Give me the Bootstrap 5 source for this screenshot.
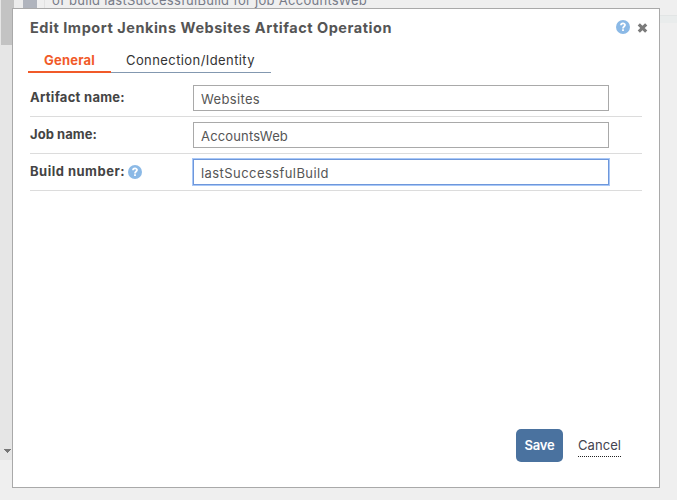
<!DOCTYPE html>
<html lang="en">
<head>
<meta charset="utf-8">
<title>Edit Operation</title>
<link href="https://cdn.jsdelivr.net/npm/bootstrap@5.3.0/dist/css/bootstrap.min.css" rel="stylesheet">
<style>
html,body{height:500px;overflow:hidden}
body{background:#efefef;color:#444;font-family:Inter,"Liberation Sans",sans-serif;font-size:13px;line-height:18px}
svg{display:block}
.backdrop{inset:0;z-index:0}
.scroll-strip{width:14px;height:460px;background:#e6e6e6;padding-left:1px}
.scroll-thumb{width:13px;height:45px;background:#c3c3c3}
.scroll-arrow{left:4px;top:449px;z-index:1}
.gutter{width:9px;height:24px;background:#ececec}
.gutter-bar{width:14px;height:24px;background:#b0b4bd}
.gutter-line{width:8px;height:24px;border-right:1px solid #e2e2e2}
.log-text{margin:-10px 0 0 7px;color:#777b88;height:20px;line-height:20px;letter-spacing:.273px}
.side-band{right:0;top:15px;width:17px;height:8px;background:#e9ecec;border-top:1px solid #e2e5e5}
.dialog-box{z-index:1;width:648px;height:480px;margin:8px 0 0 12px;background:#fff;border:1px solid #a9a9a9}
.dialog-head{height:38px;padding:10px 11px 0 17px}
.dialog-title{font-size:14.5px;font-weight:700;line-height:18px;margin:0;color:#555;letter-spacing:.529px}
.close-btn{background:none;border:0;padding:0;margin:4px 0 0 7px}
.help-top{margin-top:1px}
.tab-strip{margin-left:15px}
.tab-strip a{height:26px;line-height:27px;text-decoration:none;color:#333;padding:0 15px;border-bottom:1px solid #8398b0;letter-spacing:.413px;width:160px}
.tab-strip a.current{color:#f15a29;font-weight:700;padding:0 0 0 16px;width:83px;border-bottom:2px solid #f15a29;letter-spacing:.21px}
.fields{margin:6px 17px 0}
.field-row{height:37px;border-bottom:1px solid #dcdcdc;padding-top:5px}
.field-row:first-child{height:38px;padding-top:6px}
.field-row label{width:163px;font-weight:700;padding-top:3px;letter-spacing:.279px}
.field-row .job-label{letter-spacing:.063px}
.field-row .build-label{letter-spacing:.489px;gap:3px}
.build-label svg{margin-top:3px}
.text-box{width:416px;height:26px;border:1px solid #a9a9a9;border-radius:0;padding:1px 7px 0;font-size:13px;line-height:18px;color:#555;letter-spacing:.342px}
.text-box.job-box{letter-spacing:.161px}
.text-box.active-box{border-color:#6e97db;box-shadow:0 0 0 1px #a9c8f7;letter-spacing:.429px}
.dialog-foot{padding:0 38px 25px 0;gap:15px}
.save-btn{width:47px;height:33px;background:#4a729f;color:#fff;border:0;border-radius:5px;font-weight:600;padding:0;font-size:13px;letter-spacing:-.19px}
.cancel-link{color:#44444f;text-decoration:none;border-bottom:1px dotted #222;line-height:20px;height:22px;margin-top:1px;letter-spacing:.06px;width:43px}
</style>
</head>
<body>
<div class="backdrop position-absolute d-flex">
  <div class="scroll-strip"><div class="scroll-thumb"></div></div>
  <div class="gutter"></div>
  <div class="gutter-bar"></div>
  <div class="gutter-line"></div>
  <div class="log-text">of build lastSuccessfulBuild for job AccountsWeb</div>
  <div class="side-band position-absolute"></div>
</div>
<svg class="scroll-arrow position-absolute" width="7" height="4" viewBox="0 0 7 4"><path d="M0 0h7v1H6v1H5v1H4v1H3V3H2V2H1V1H0z" fill="#777"/></svg>

<main class="dialog-box position-relative d-flex flex-column">
  <header class="dialog-head d-flex align-items-start">
    <h1 class="dialog-title me-auto">Edit Import Jenkins Websites Artifact Operation</h1>
    <svg class="help-top" width="14" height="14" viewBox="0 0 14 14"><circle cx="7" cy="7" r="7" fill="#8bb9e6"/><path d="M5 5.2C5 2.9 9 2.9 9 5.1 9 6.6 7 6.5 7 8.4" fill="none" stroke="#fff" stroke-width="1.8"/><path d="M6.1 9.3h1.8v1.7H6.1z" fill="#fff"/></svg>
    <button class="close-btn" type="button" aria-label="Close"><svg width="11" height="10" viewBox="0 0 11 10"><path d="M1.8 1.3 9.2 8.7M9.2 1.3 1.8 8.7" stroke="#7b7b7b" stroke-width="3.1"/></svg></button>
  </header>
  <nav class="tab-strip d-flex">
    <a class="current" href="#">General</a>
    <a href="#">Connection/Identity</a>
  </nav>
  <form class="fields">
    <div class="field-row d-flex align-items-start">
      <label for="artifact">Artifact name:</label>
      <input class="form-control text-box" id="artifact" value="Websites">
    </div>
    <div class="field-row d-flex align-items-start">
      <label class="job-label" for="job">Job name:</label>
      <input class="form-control text-box job-box" id="job" value="AccountsWeb">
    </div>
    <div class="field-row d-flex align-items-start">
      <label class="build-label d-flex" for="build">Build number:
        <svg width="14" height="14" viewBox="0 0 14 14"><circle cx="7" cy="7" r="7" fill="#8bb9e6"/><path d="M5 5.2C5 2.9 9 2.9 9 5.1 9 6.6 7 6.5 7 8.4" fill="none" stroke="#fff" stroke-width="1.8"/><path d="M6.1 9.3h1.8v1.7H6.1z" fill="#fff"/></svg>
      </label>
      <input class="form-control text-box active-box" id="build" value="lastSuccessfulBuild">
    </div>
  </form>
  <footer class="dialog-foot d-flex justify-content-end align-items-center mt-auto">
    <button class="btn save-btn" type="button">Save</button>
    <a class="cancel-link" href="#">Cancel</a>
  </footer>
</main>
<script src="https://cdn.jsdelivr.net/npm/bootstrap@5.3.0/dist/js/bootstrap.bundle.min.js"></script>
</body>
</html>
